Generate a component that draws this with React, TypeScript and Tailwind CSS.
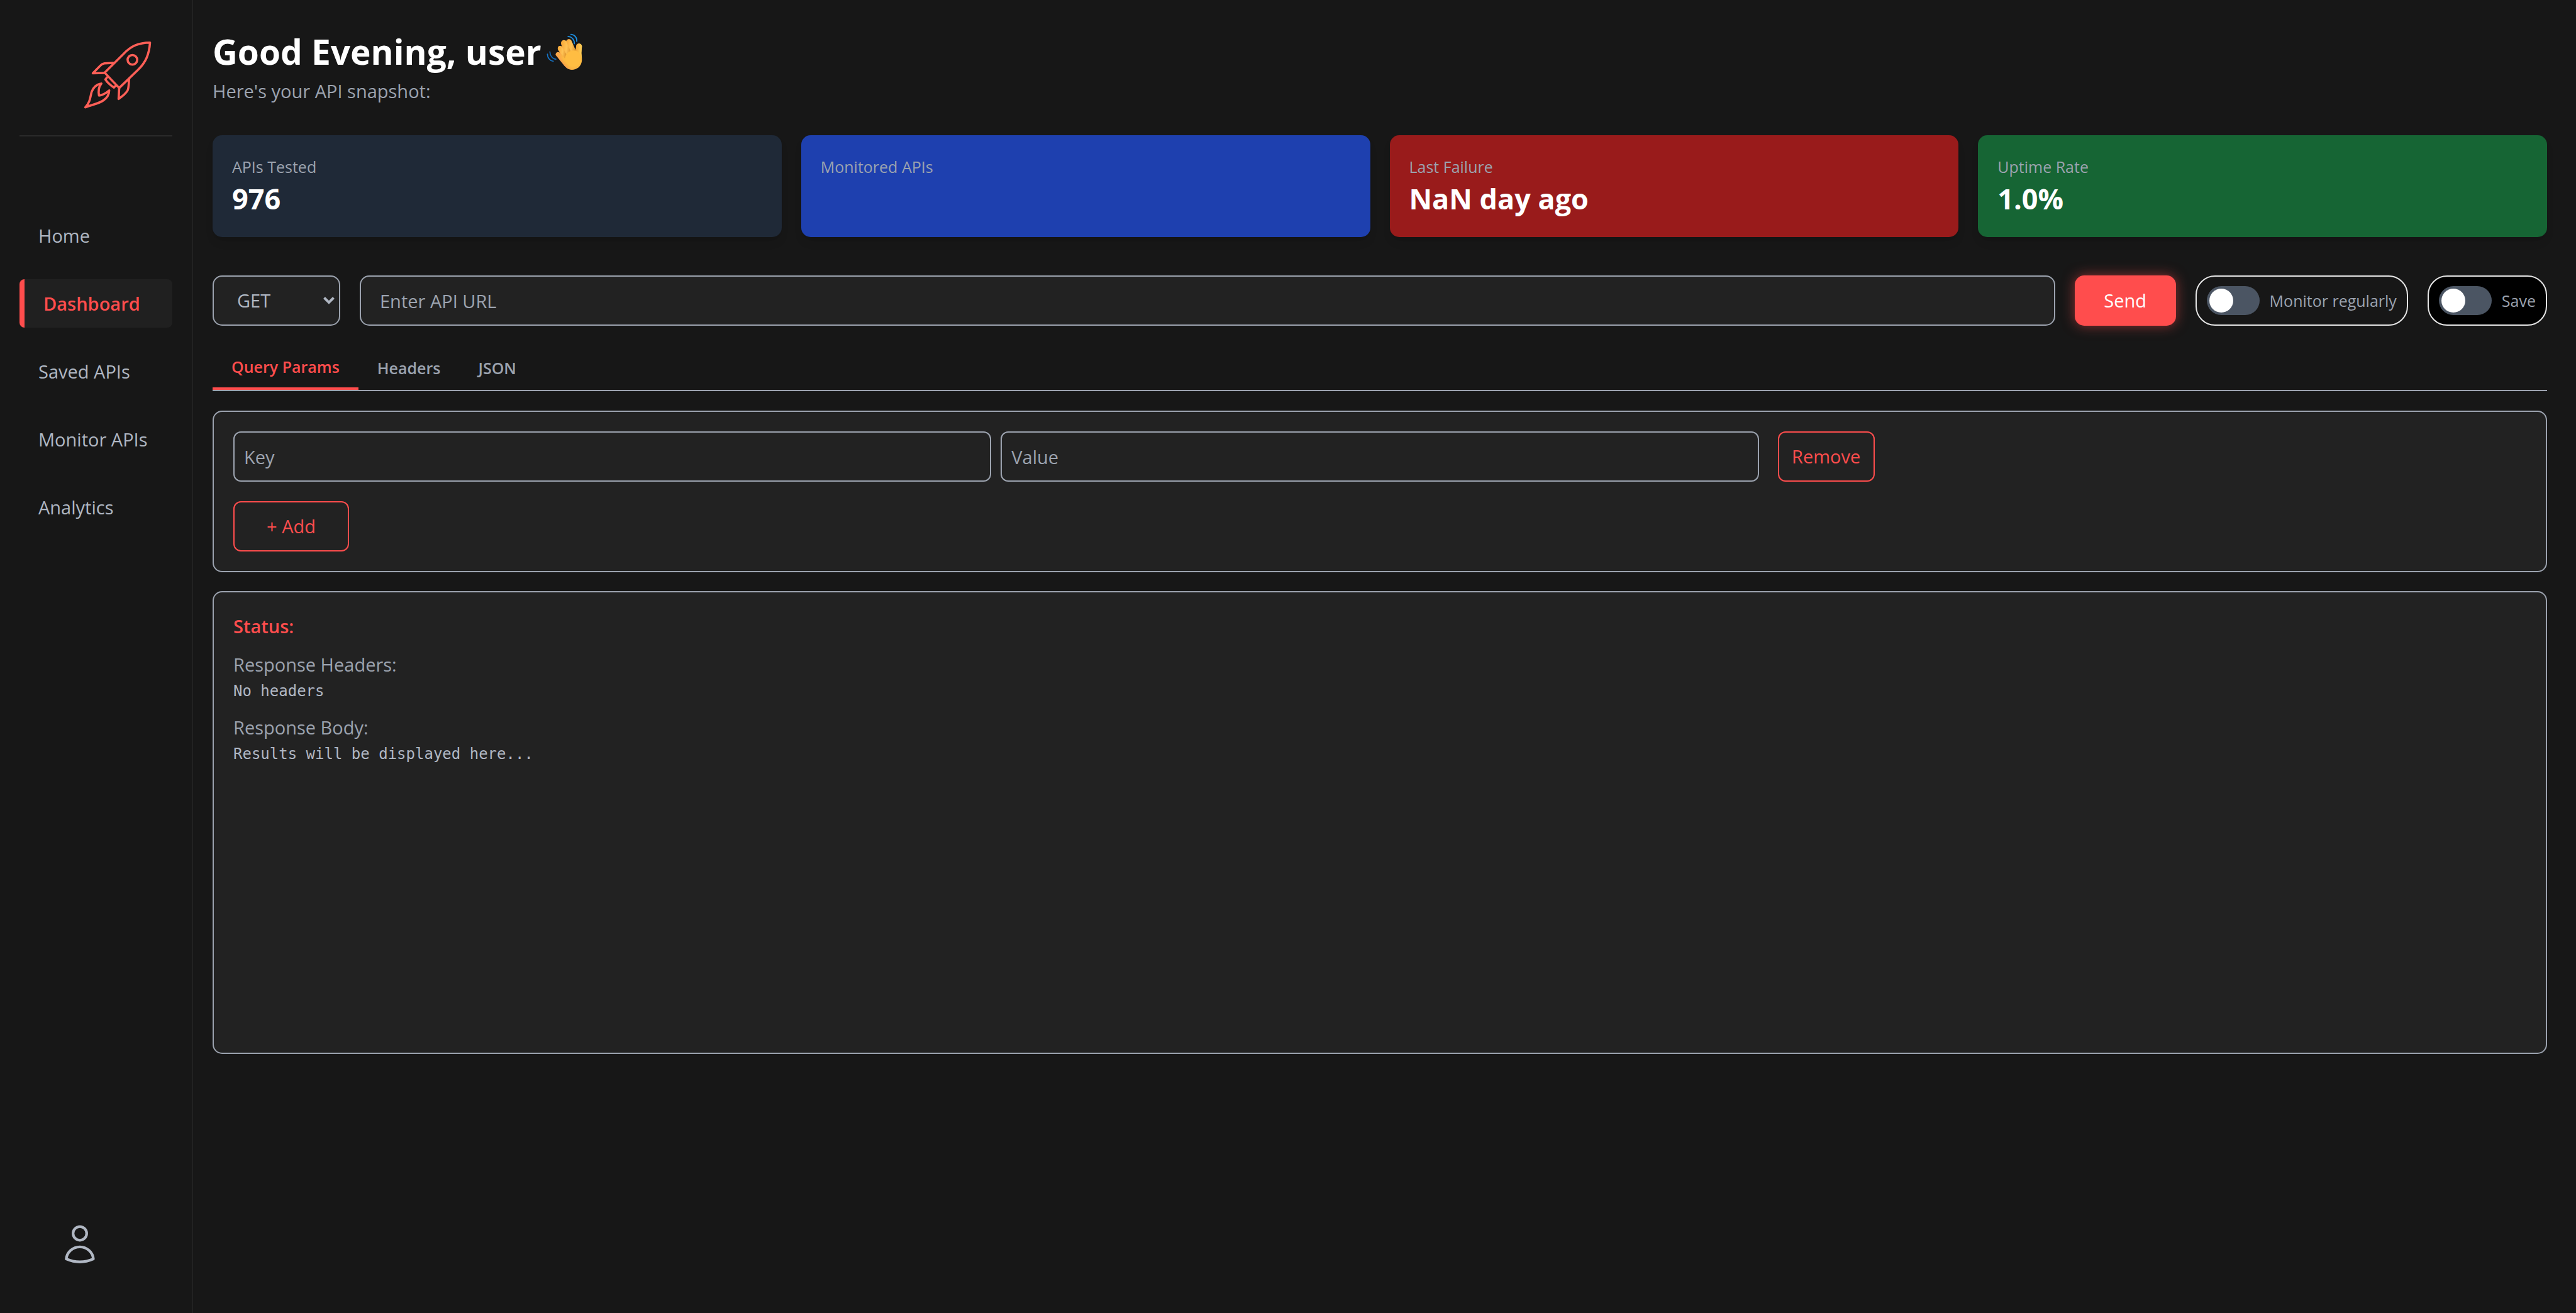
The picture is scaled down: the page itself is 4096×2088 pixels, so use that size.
import { useState } from "react";

const navItems = ["Home", "Dashboard", "Saved APIs", "Monitor APIs", "Analytics"];

const stats = [
  { label: "APIs Tested", value: "976", tone: "bg-[#1f2937]" },
  { label: "Monitored APIs", value: "", tone: "bg-[#1e40af]" },
  { label: "Last Failure", value: "NaN day ago", tone: "bg-[#991b1b]" },
  { label: "Uptime Rate", value: "1.0%", tone: "bg-[#166534]" },
];

const tabs = ["Query Params", "Headers", "JSON"];

function RocketLogo() {
  return (
    <svg
      viewBox="150 96 604 606"
      className="h-[108px] w-[108px]"
      fill="none"
      stroke="#ff5f57"
      strokeWidth="20"
      strokeLinejoin="round"
      strokeLinecap="round"
      aria-hidden="true"
    >
      <path d="M337 380 L505 212 C575 138 640 113 741 111 C734 215 705 285 633 356 L466 516 Z" />
      <circle cx="584" cy="265" r="43" />
      <path d="M413 292 L335 297 C318 299 307 307 297 317 L231 385 L334 382" />
      <path d="M554 438 C550 475 554 515 540 540 C523 568 490 594 461 614 L466 518" />
      <path d="M357 422 L343 440 C355 461 395 499 419 512 L434 497" />
      <path d="M307 477 C264 481 232 515 220 552 C207 600 209 640 164 689 C222 664 283 658 324 628 C357 606 376 578 377 538 C355 556 325 580 286 584 C279 550 283 502 307 477 Z" />
    </svg>
  );
}

function WavingHand() {
  return (
    <svg viewBox="215 125 320 330" className="h-[59px] w-[57px]" role="img" aria-label="waving hand">
      <defs>
        <radialGradient id="palm" gradientUnits="userSpaceOnUse" cx="450" cy="345" r="130">
          <stop offset="0" stopColor="#ffbd41" />
          <stop offset="0.6" stopColor="#fdbb40" />
          <stop offset="1" stopColor="#f9a84a" />
        </radialGradient>
        <linearGradient id="finger" x1="0" y1="0.4" x2="1" y2="0.6">
          <stop offset="0" stopColor="#f7a93a" />
          <stop offset="0.55" stopColor="#ffc355" />
          <stop offset="1" stopColor="#e0962f" />
        </linearGradient>
        <linearGradient id="thumb" x1="0" y1="0" x2="1" y2="0">
          <stop offset="0" stopColor="#f2a535" />
          <stop offset="1" stopColor="#ffd25a" />
        </linearGradient>
        <linearGradient id="edge" gradientUnits="userSpaceOnUse" x1="345" y1="405" x2="385" y2="368">
          <stop offset="0" stopColor="#f08056" />
          <stop offset="1" stopColor="#fdb843" stopOpacity="0" />
        </linearGradient>
      </defs>
      <path
        d="M297 318 C294 296 318 284 334 297 L317 266 C309 238 340 228 353 246 L346 218 C341 188 374 176 390 194 C400 171 430 172 438 192 L474 276 L481 233 C487 209 527 210 531 238 L526 300 L531 365 C527 423 485 450 441 450 C410 449 391 434 372 411 Z"
        fill="url(#palm)"
      />
      <path d="M391 200 C393 172 430 170 438 194 L476 280 L436 292 Z" fill="url(#finger)" />
      <path d="M347 222 C338 188 379 172 391 198 L434 292 L392 312 Z" fill="url(#finger)" />
      <path d="M317 270 C308 238 345 226 356 250 L392 310 L378 348 Z" fill="url(#finger)" />
      <path d="M476 280 L481 233 C487 209 527 210 531 238 L526 300 L531 350 Z" fill="url(#thumb)" />
      <ellipse cx="455" cy="350" rx="72" ry="72" fill="#ffbd42" />
      <path
        d="M297 318 C294 296 318 284 334 300 L380 350 L470 449 C420 455 391 434 372 411 Z"
        fill="url(#edge)"
      />
      <g fill="none" strokeWidth="10" strokeLinecap="round">
        <path d="M433 134 C467 137 489 164 485 197" stroke="#1d8fe1" />
        <path d="M407 153 C442 154 466 183 463 217" stroke="#1d8fe1" />
        <path d="M245 290 C246 325 268 352 299 356" stroke="#1467b5" />
        <path d="M223 311 C224 344 245 370 275 374" stroke="#1673c4" />
      </g>
    </svg>
  );
}

function ProfileIcon() {
  return (
    <svg
      viewBox="272 280 282 360"
      className="h-[64px] w-[50px]"
      fill="none"
      stroke="#b0b7c3"
      strokeWidth="24"
      strokeLinejoin="round"
      aria-hidden="true"
    >
      <circle cx="413" cy="361" r="61" />
      <path d="M291 590 A122 119 0 0 1 534 590 Q413 643 291 590 Z" />
    </svg>
  );
}

function Toggle({ label, className }: { label: string; className: string }) {
  const [on, setOn] = useState(false);
  return (
    <label
      className={
        "flex h-[80px] shrink-0 cursor-pointer items-center gap-4 rounded-[31px] border-2 border-[#e5e5e5] px-4 " +
        className
      }
    >
      <input type="checkbox" className="peer sr-only" checked={on} onChange={() => setOn(!on)} />
      <span className="flex h-[46px] w-[84px] items-start rounded-full bg-[#4b5563] p-1 peer-checked:justify-end peer-checked:bg-[#ff4d4d]">
        <span className="size-[38px] rounded-full bg-white" />
      </span>
      <span className="text-[25px] leading-[38px] text-[#9ca3af]">{label}</span>
    </label>
  );
}

export default function App() {
  const [tab, setTab] = useState("Query Params");
  return (
    <div className="flex min-h-screen bg-[#171717] font-['Open_Sans','Noto_Sans',sans-serif] text-[29px] leading-[46px]">
      <aside className="flex w-[307px] shrink-0 flex-col border-r-2 border-[#222222] px-[31px] pt-[65px] pb-[77px]">
        <div className="flex h-[152px] items-start justify-center border-b-2 border-[#2a2a2a] pl-[69px]">
          <a href="#home" aria-label="Home">
            <RocketLogo />
          </a>
        </div>
        <nav className="mt-[119px] flex flex-col gap-[31px]">
          {navItems.map((item) => (
            <a
              key={item}
              href={"#" + item}
              className={
                item === "Dashboard"
                  ? "flex h-[77px] items-center rounded-lg border-l-8 border-[#ff4d4d] bg-[#202020] pl-[30px] font-semibold text-[#ff4d4d]"
                  : "flex h-[77px] items-center rounded-lg pl-[30px] text-[#b0b7c3]"
              }
            >
              {item}
            </a>
          ))}
        </nav>
        <button type="button" aria-label="Profile" className="mt-auto ml-[71px] self-start">
          <ProfileIcon />
        </button>
      </aside>

      <main className="flex min-w-0 flex-1 flex-col py-[46px] pr-[46px] pl-[31px]">
        <h1 className="flex h-[72px] items-center gap-2 text-[55px] leading-[72px] font-bold text-white">
          Good Evening, user
          <WavingHand />
        </h1>
        <p className="mt-1 text-[#9ca3af]">Here's your API snapshot:</p>

        <section className="mt-[47px] grid grid-cols-4 gap-[31px]">
          {stats.map((s) => (
            <div key={s.label} className={"h-[162px] rounded-[15px] p-[31px] shadow-lg " + s.tone}>
              <p className="text-[25px] leading-[38px] text-[#9ca3af]">{s.label}</p>
              <p className="text-[45px] leading-[64px] font-bold text-white">{s.value}</p>
            </div>
          ))}
        </section>

        <form className="mt-[61px] flex items-center gap-[31px]" onSubmit={(e) => e.preventDefault()}>
          <div className="relative w-[203px] shrink-0">
            <select
              aria-label="Method"
              className="h-[80px] w-full appearance-none rounded-[15px] border-2 border-[#9ca3af] bg-[#222222] pl-[37px] text-[#b0b7c3]"
            >
              <option>GET</option>
              <option>POST</option>
              <option>PUT</option>
              <option>DELETE</option>
            </select>
            <svg
              viewBox="0 0 18 14"
              className="pointer-events-none absolute top-[33px] right-[9px] h-[14px] w-[18px]"
              fill="none"
              stroke="#b0b7c3"
              strokeWidth="4"
              aria-hidden="true"
            >
              <path d="M1.5 2.5 L9 10 L16.5 2.5" />
            </svg>
          </div>
          <input
            type="text"
            aria-label="API URL"
            placeholder="Enter API URL"
            className="h-[80px] min-w-0 flex-1 rounded-[15px] border-2 border-[#9ca3af] bg-[#222222] px-[30px] text-[#b0b7c3] placeholder:text-[#9ca3af]"
          />
          <button
            type="submit"
            className="h-[80px] w-[161px] shrink-0 rounded-[15px] bg-[#ff4d4d] text-white shadow-[0_0_20px_rgba(255,77,77,0.5)]"
          >
            Send
          </button>
          <Toggle label="Monitor regularly" className="bg-[#171717]" />
          <Toggle label="Save" className="bg-black" />
        </form>

        <div role="tablist" className="mt-[31px] flex border-b-2 border-[#9ca3af]">
          {tabs.map((t) => (
            <button
              key={t}
              type="button"
              role="tab"
              aria-selected={t === tab}
              onClick={() => setTab(t)}
              className={
                t === tab
                  ? "h-[71px] border-b-4 border-[#ff4d4d] px-[30px] text-[25px] leading-[38px] font-semibold text-[#ff4d4d]"
                  : "h-[71px] px-[30px] text-[25px] leading-[38px] font-semibold text-[#9ca3af]"
              }
            >
              {t}
            </button>
          ))}
        </div>

        <section className="mt-[31px] rounded-[15px] border-2 border-[#9ca3af] bg-[#222222] p-[31px]">
          <div className="grid grid-cols-3 gap-[15px]">
            <input
              type="text"
              aria-label="Key"
              placeholder="Key"
              className="h-[80px] min-w-0 rounded-[12px] border-2 border-[#9ca3af] bg-transparent px-[15px] text-[#b0b7c3] placeholder:text-[#9ca3af]"
            />
            <input
              type="text"
              aria-label="Value"
              placeholder="Value"
              className="h-[80px] min-w-0 rounded-[12px] border-2 border-[#9ca3af] bg-transparent px-[15px] text-[#b0b7c3] placeholder:text-[#9ca3af]"
            />
            <button
              type="button"
              className="ml-[15px] h-[80px] w-[154px] rounded-[12px] border-2 border-[#ff4d4d] text-[#ff4d4d]"
            >
              Remove
            </button>
          </div>
          <button
            type="button"
            className="mt-[31px] block h-[80px] w-[184px] rounded-[12px] border-2 border-[#ff4d4d] text-[#ff4d4d]"
          >
            + Add
          </button>
        </section>

        <section className="mt-[30px] min-h-[736px] rounded-[15px] border-2 border-[#9ca3af] bg-[#222222] p-[31px]">
          <p className="font-semibold text-[#ff4d4d]">Status:</p>
          <p className="mt-[15px] text-[#9ca3af]">Response Headers:</p>
          <pre className="font-['DejaVu_Sans_Mono',monospace] text-[24px] leading-[38px] text-[#b0b7c3]">No headers</pre>
          <p className="mt-[16px] text-[#9ca3af]">Response Body:</p>
          <pre className="font-['DejaVu_Sans_Mono',monospace] text-[24px] leading-[38px] text-[#b0b7c3]">
            Results will be displayed here...
          </pre>
        </section>
      </main>
    </div>
  );
}
